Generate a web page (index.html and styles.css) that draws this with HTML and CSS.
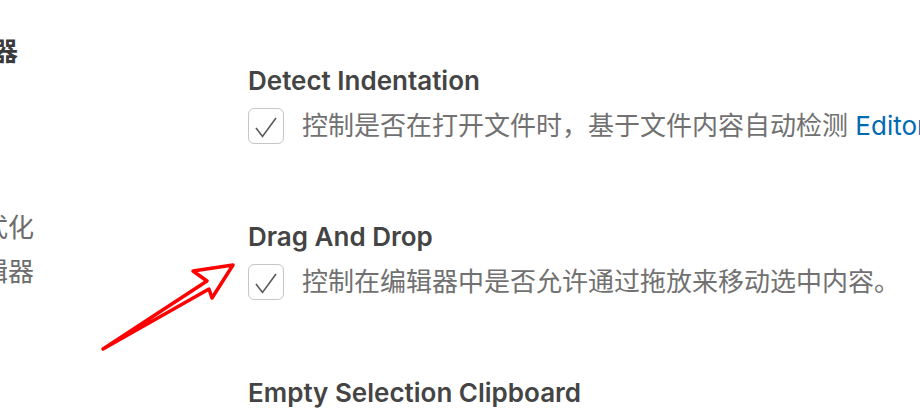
FILE: index.html
```
<!DOCTYPE html>
<html lang="zh-CN">
<head>
    <meta charset="UTF-8">
    <title>设置</title>
    <link rel="stylesheet" href="styles.css">
</head>
<body>

<div class="page">
    <div class="toc">
        <div class="toc-item active"><span>文本编辑器</span></div>
        <div class="toc-item"><span>格式化</span></div>
        <div class="toc-item"><span>差异编辑器</span></div>
    </div>

    <div class="settings">
        <div class="setting">
            <div class="title">Detect Indentation</div>
            <div class="row">
                <span class="checkbox"><svg viewBox="0 0 36 36" width="36" height="36"><polyline points="8,20 14.5,28.5 28,10" /></svg></span>
                <span class="desc">控制是否在打开文件时，基于文件内容自动检测 <a href="#">Editor: Tab Size</a> 和 <a href="#">Editor: Insert Spaces</a>。</span>
            </div>
        </div>
        <div class="setting">
            <div class="title">Drag And Drop</div>
            <div class="row">
                <span class="checkbox"><svg viewBox="0 0 36 36" width="36" height="36"><polyline points="8,20 14.5,28.5 28,10" /></svg></span>
                <span class="desc">控制在编辑器中是否允许通过拖放来移动选中内容。</span>
            </div>
        </div>
        <div class="setting">
            <div class="title">Empty Selection Clipboard</div>
            <div class="row">
                <span class="checkbox"><svg viewBox="0 0 36 36" width="36" height="36"><polyline points="8,20 14.5,28.5 28,10" /></svg></span>
                <span class="desc">控制在没有选择内容时进行复制是否复制当前行。</span>
            </div>
        </div>
    </div>
</div>

<!-- 标注箭头 -->
<svg class="arrow" viewBox="0 0 920 416" width="920" height="416">
    <polygon points="233,265 193,271 207,281 103,349 209,289 212,298" />
</svg>

</body>
</html>
```

FILE: styles.css
```
*{
    margin: 0;
    padding: 0;
}
body{
    width: 920px;
    height: 416px;
    overflow: hidden;
    background-color: #fff;
    font-family: Inter, "Noto Sans CJK SC", sans-serif;
    position: relative;
}
.page{
    display: flex;
    gap: 214px;
}
.toc{
    width: 34px;
    flex: none;
    overflow: hidden;
    padding-top: 30px;
    font-size: 26px;
    line-height: 44px;
    color: #6c6c6c;
}
.toc-item{
    display: flex;
    justify-content: flex-end;
    white-space: nowrap;
}
.toc-item.active{
    color: #3b3b3b;
    font-weight: 600;
    padding-right: 16px;
    margin-bottom: 132px;
}
.settings{
    width: 1200px;
    flex: none;
    padding-top: 63px;
}
.setting{
    height: 156px;
}
.title{
    font-size: 26px;
    line-height: 36px;
    font-weight: 600;
    color: #444;
}
.row{
    display: flex;
    align-items: center;
    gap: 18px;
    margin-top: 9px;
}
.checkbox{
    width: 34px;
    height: 34px;
    border: 1px solid #c6c6c6;
    border-radius: 6px;
    flex: none;
}
.checkbox svg{
    display: block;
    margin: -1px;
}
.checkbox polyline{
    fill: none;
    stroke: #5a5a5a;
    stroke-width: 1.6;
}
.desc{
    font-size: 26px;
    line-height: 36px;
    color: #717171;
    white-space: nowrap;
}
.desc a{
    color: #006ab1;
    text-decoration: none;
}
.arrow{
    position: absolute;
    left: 0;
    top: 0;
}
.arrow polygon{
    fill: none;
    stroke: #ff0000;
    stroke-width: 3.5;
    stroke-linejoin: round;
}
```
